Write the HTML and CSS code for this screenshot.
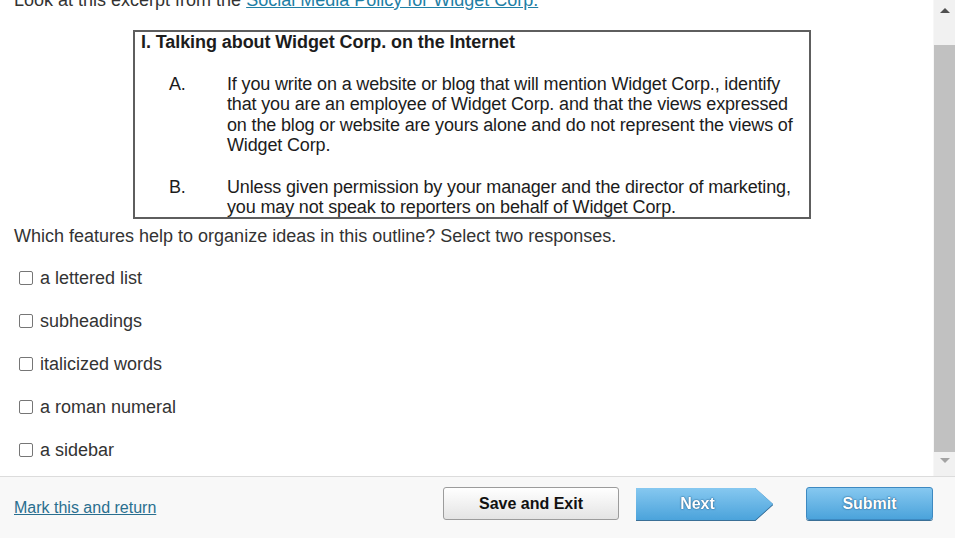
FILE: index.html
```html
<!DOCTYPE html>
<html lang="en">
<head>
<meta charset="utf-8">
<title>Question</title>
<link rel="stylesheet" href="styles.css">
</head>
<body>
<div class="app">
  <div class="main">
    <div class="content">
      <p class="intro">Look at this excerpt from the <a href="#" class="link">Social Media Policy for Widget Corp.</a></p>
      <div class="excerpt">
        <div class="ex-head">I. Talking about Widget Corp. on the Internet</div>
        <div class="ex-item ex-a">
          <span class="ex-letter">A.</span>
          <div class="ex-text">
            <span class="ex-line">If you write on a website or blog that will mention Widget Corp., identify</span>
            <span class="ex-line">that you are an employee of Widget Corp. and that the views expressed</span>
            <span class="ex-line">on the blog or website are yours alone and do not represent the views of</span>
            <span class="ex-line">Widget Corp.</span>
          </div>
        </div>
        <div class="ex-item ex-b">
          <span class="ex-letter">B.</span>
          <div class="ex-text">
            <span class="ex-line">Unless given permission by your manager and the director of marketing,</span>
            <span class="ex-line">you may not speak to reporters on behalf of Widget Corp.</span>
          </div>
        </div>
      </div>
      <p class="question">Which features help to organize ideas in this outline? Select two responses.</p>
      <div class="options">
        <label class="option"><input type="checkbox" class="cb"><span>a lettered list</span></label>
        <label class="option"><input type="checkbox" class="cb"><span>subheadings</span></label>
        <label class="option"><input type="checkbox" class="cb"><span>italicized words</span></label>
        <label class="option"><input type="checkbox" class="cb"><span>a roman numeral</span></label>
        <label class="option"><input type="checkbox" class="cb"><span>a sidebar</span></label>
      </div>
    </div>
    <div class="scrollbar">
      <div class="sb-btn sb-up"><span class="tri-up"></span></div>
      <div class="sb-track"><div class="sb-thumb"></div></div>
      <div class="sb-btn sb-down"><span class="tri-down"></span></div>
    </div>
  </div>
  <div class="footer">
    <a href="#" class="mark">Mark this and return</a>
    <button class="btn btn-save">Save and Exit</button>
    <div class="next-wrap"><button class="btn btn-next">Next</button></div>
    <button class="btn btn-submit">Submit</button>
  </div>
</div>
</body>
</html>
```
FILE: styles.css
```css
* { box-sizing: border-box; }
html, body { margin: 0; padding: 0; background: #fff; }
body {
  font-family: "Liberation Sans", Arial, sans-serif;
  color: #333;
  width: 955px;
  height: 538px;
  overflow: hidden;
}
.app { display: flex; flex-direction: column; height: 538px; }
.main { display: flex; height: 476px; }
.content {
  flex: 1;
  overflow: hidden;
  padding: 0 14px;
}
.intro {
  margin: -10px 0 0 0;
  font-size: 18px;
  line-height: 20px;
  white-space: nowrap;
}
.link { color: #1f7fa5; text-decoration: underline; }
.excerpt {
  margin: 20px 0 0 119px;
  width: 678px;
  height: 189px;
  border: 2px solid #5e5e5e;
  padding: 0 0 0 6px;
  overflow: hidden;
  color: #1c1c1c;
  font-size: 18px;
  line-height: 20.5px;
  letter-spacing: -0.15px;
}
.ex-head { font-weight: bold; white-space: nowrap; letter-spacing: -0.08px; }
.ex-item { display: flex; }
.ex-a { margin-top: 21px; }
.ex-b { margin-top: 21px; }
.ex-letter { width: 58px; margin-left: 28px; flex: none; }
.ex-text { display: flex; flex-direction: column; }
.ex-line { white-space: nowrap; }
.question {
  margin: 7px 0 0 0;
  font-size: 18px;
  line-height: 20px;
}
.options {
  margin-top: 22px;
  display: flex;
  flex-direction: column;
  gap: 23px;
}
.option {
  display: flex;
  align-items: center;
  height: 20px;
  font-size: 18px;
  line-height: 20px;
  color: #333;
}
.cb {
  -webkit-appearance: none;
  appearance: none;
  width: 14px;
  height: 14px;
  margin: 0 7px 0 5px;
  border: 1px solid #767676;
  border-radius: 2px;
  background: #fff;
  flex: none;
}
.scrollbar {
  width: 22px;
  flex: none;
  background: #f1f1f1;
  border-left: 1px solid #f7f7f7;
  display: flex;
  flex-direction: column;
}
.sb-btn { display: flex; justify-content: center; align-items: center; flex: none; }
.sb-up { height: 20px; }
.sb-down { height: 24px; align-items: flex-start; padding-top: 6px; }
.tri-up {
  width: 0; height: 0;
  border-left: 5px solid transparent;
  border-right: 5px solid transparent;
  border-bottom: 5px solid #505050;
}
.tri-down {
  width: 0; height: 0;
  border-left: 5px solid transparent;
  border-right: 5px solid transparent;
  border-top: 5px solid #a3a3a3;
}
.sb-track { flex: 1; display: flex; flex-direction: column; }
.sb-thumb {
  margin-top: 25px;
  height: 407px;
  background: #c1c1c1;
}
.footer {
  flex: 1;
  display: flex;
  align-items: flex-start;
  border-top: 1px solid #dcdcdc;
  background: #f8f8f8;
  padding: 0 22px 0 14px;
}
.mark {
  color: #2a6f8f;
  font-size: 16px;
  line-height: 18px;
  text-decoration: underline;
  margin-top: 22px;
}
.btn {
  font-family: "Liberation Sans", Arial, sans-serif;
  font-weight: bold;
  font-size: 16px;
  cursor: pointer;
  padding: 0;
}
.btn-save {
  margin-left: auto;
  margin-top: 10px;
  width: 176px;
  height: 33px;
  color: #111;
  background: linear-gradient(#ffffff, #e4e4e4);
  border: 1px solid #9c9c9c;
  border-radius: 3px;
}
.next-wrap {
  margin-left: 17px;
  margin-top: 11px;
  filter: drop-shadow(0 0 0.6px #2f77ad) drop-shadow(0 1px 0 #3a6f96);
}
.btn-next {
  display: block;
  width: 137px;
  height: 32px;
  border: none;
  color: #fff;
  text-shadow: 0 0 2px #245f8c, 0 0 1px #245f8c;
  background: linear-gradient(#86c8f0, #4ba3db);
  clip-path: polygon(0 0, 87% 0, 100% 50%, 87% 100%, 0 100%);
  padding-right: 14px;
}
.btn-submit {
  margin-left: 33px;
  margin-top: 10px;
  width: 127px;
  height: 33px;
  color: #fff;
  text-shadow: 0 0 2px #245f8c, 0 0 1px #245f8c;
  background: linear-gradient(#86c8f0, #4ba3db);
  border: 1px solid #3d89c1;
  border-radius: 3px;
  box-shadow: 0 1px 0 #3a6f96;
}
```
